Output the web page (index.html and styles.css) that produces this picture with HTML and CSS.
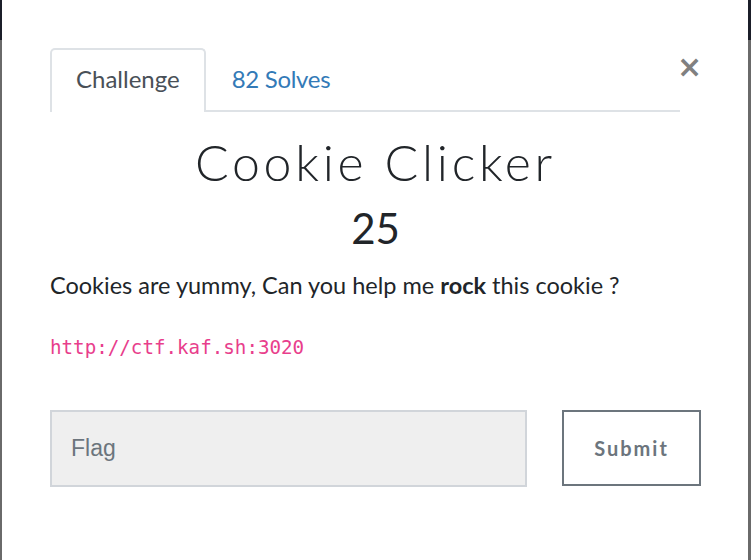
FILE: index.html
```html
<!DOCTYPE html>
<html>
<head>
<meta charset="utf-8">
<link rel="stylesheet" href="styles.css">
</head>
<body>
<div class="backdrop">
  <div class="modal">
    <div class="modal-body">
      <div class="header">
        <ul class="nav">
          <li class="tab active">Challenge</li>
          <li class="tab link">82 Solves</li>
        </ul>
        <button class="close" type="button">×</button>
      </div>
      <h1 class="title">Cookie Clicker</h1>
      <div class="value">25</div>
      <p class="desc">Cookies are yummy, Can you help me <strong>rock</strong> this cookie ?</p>
      <p class="code">http://ctf.kaf.sh:3020</p>
      <div class="submit-row">
        <input class="flag" type="text" placeholder="Flag">
        <button class="submit" type="button">Submit</button>
      </div>
    </div>
  </div>
</div>
</body>
</html>
```
FILE: styles.css
```css
html, body {
  margin: 0;
  padding: 0;
  height: 100%;
  overflow: hidden;
}
body {
  background: linear-gradient(to bottom, #1b1e29 0, #1b1e29 40px, #6a6a6a 40px, #6a6a6a 100%);
  font-family: Lato, "Noto Sans", sans-serif;
  color: #212529;
}
.backdrop {
  height: 100%;
  padding: 0 3px 0 2px;
  box-sizing: border-box;
}
.modal {
  background: #fff;
  height: 100%;
}
.modal-body {
  padding: 48px 47px 0 48px;
}
.header {
  display: flex;
  align-items: flex-start;
}
.nav {
  flex: 1;
  display: flex;
  list-style: none;
  margin: 0;
  padding: 0;
  border-bottom: 2px solid #dee2e6;
}
.tab {
  font-size: 24px;
  height: 60px;
  line-height: 58px;
  padding: 0 24px;
  border: 2px solid transparent;
  border-bottom: none;
  border-radius: 5px 5px 0 0;
  margin-bottom: -2px;
}
.tab.active {
  border-color: #dee2e6;
  color: #495057;
  background: #fff;
  padding-bottom: 2px;
}
.tab.link {
  color: #337ab7;
  padding-left: 24px;
  letter-spacing: -0.3px;
}
.close {
  width: 21px;
  background: none;
  border: none;
  padding: 0;
  margin: 1px 3px 0 -3px;
  font-family: "DejaVu Sans", sans-serif;
  font-size: 30px;
  line-height: 36px;
  color: #808080;
  font-weight: bold;
}
.title {
  font-family: Lato, sans-serif;
  font-weight: 300;
  font-size: 50px;
  letter-spacing: 3.7px;
  text-align: center;
  margin: 18px 0 0;
  line-height: 64px;
}
.value {
  text-align: center;
  font-size: 42px;
  line-height: 50px;
  margin-top: 9px;
}
.desc {
  font-size: 23.5px;
  margin: 17px 0 0;
  line-height: 30px;
}
.code {
  font-family: "DejaVu Sans Mono", monospace;
  font-size: 19.2px;
  color: #e83e8c;
  margin: 36px 0 0;
  line-height: 24px;
}
.submit-row {
  display: flex;
  margin-top: 50px;
  gap: 35px;
}
.flag {
  width: 477px;
  height: 77px;
  box-sizing: border-box;
  border: 2px solid #d1d5da;
  background: #efefef;
  padding: 0 19px;
  font-family: "Liberation Sans", Arial, sans-serif;
  font-size: 23px;
  color: #495057;
  outline: none;
}
.flag::placeholder {
  color: #6c757d;
}
.submit {
  width: 139px;
  height: 76px;
  box-sizing: border-box;
  border: 2px solid #6c757d;
  background: #fff;
  color: #6c757d;
  font-family: Lato, sans-serif;
  font-weight: bold;
  font-size: 20px;
  letter-spacing: 2px;
}
```
